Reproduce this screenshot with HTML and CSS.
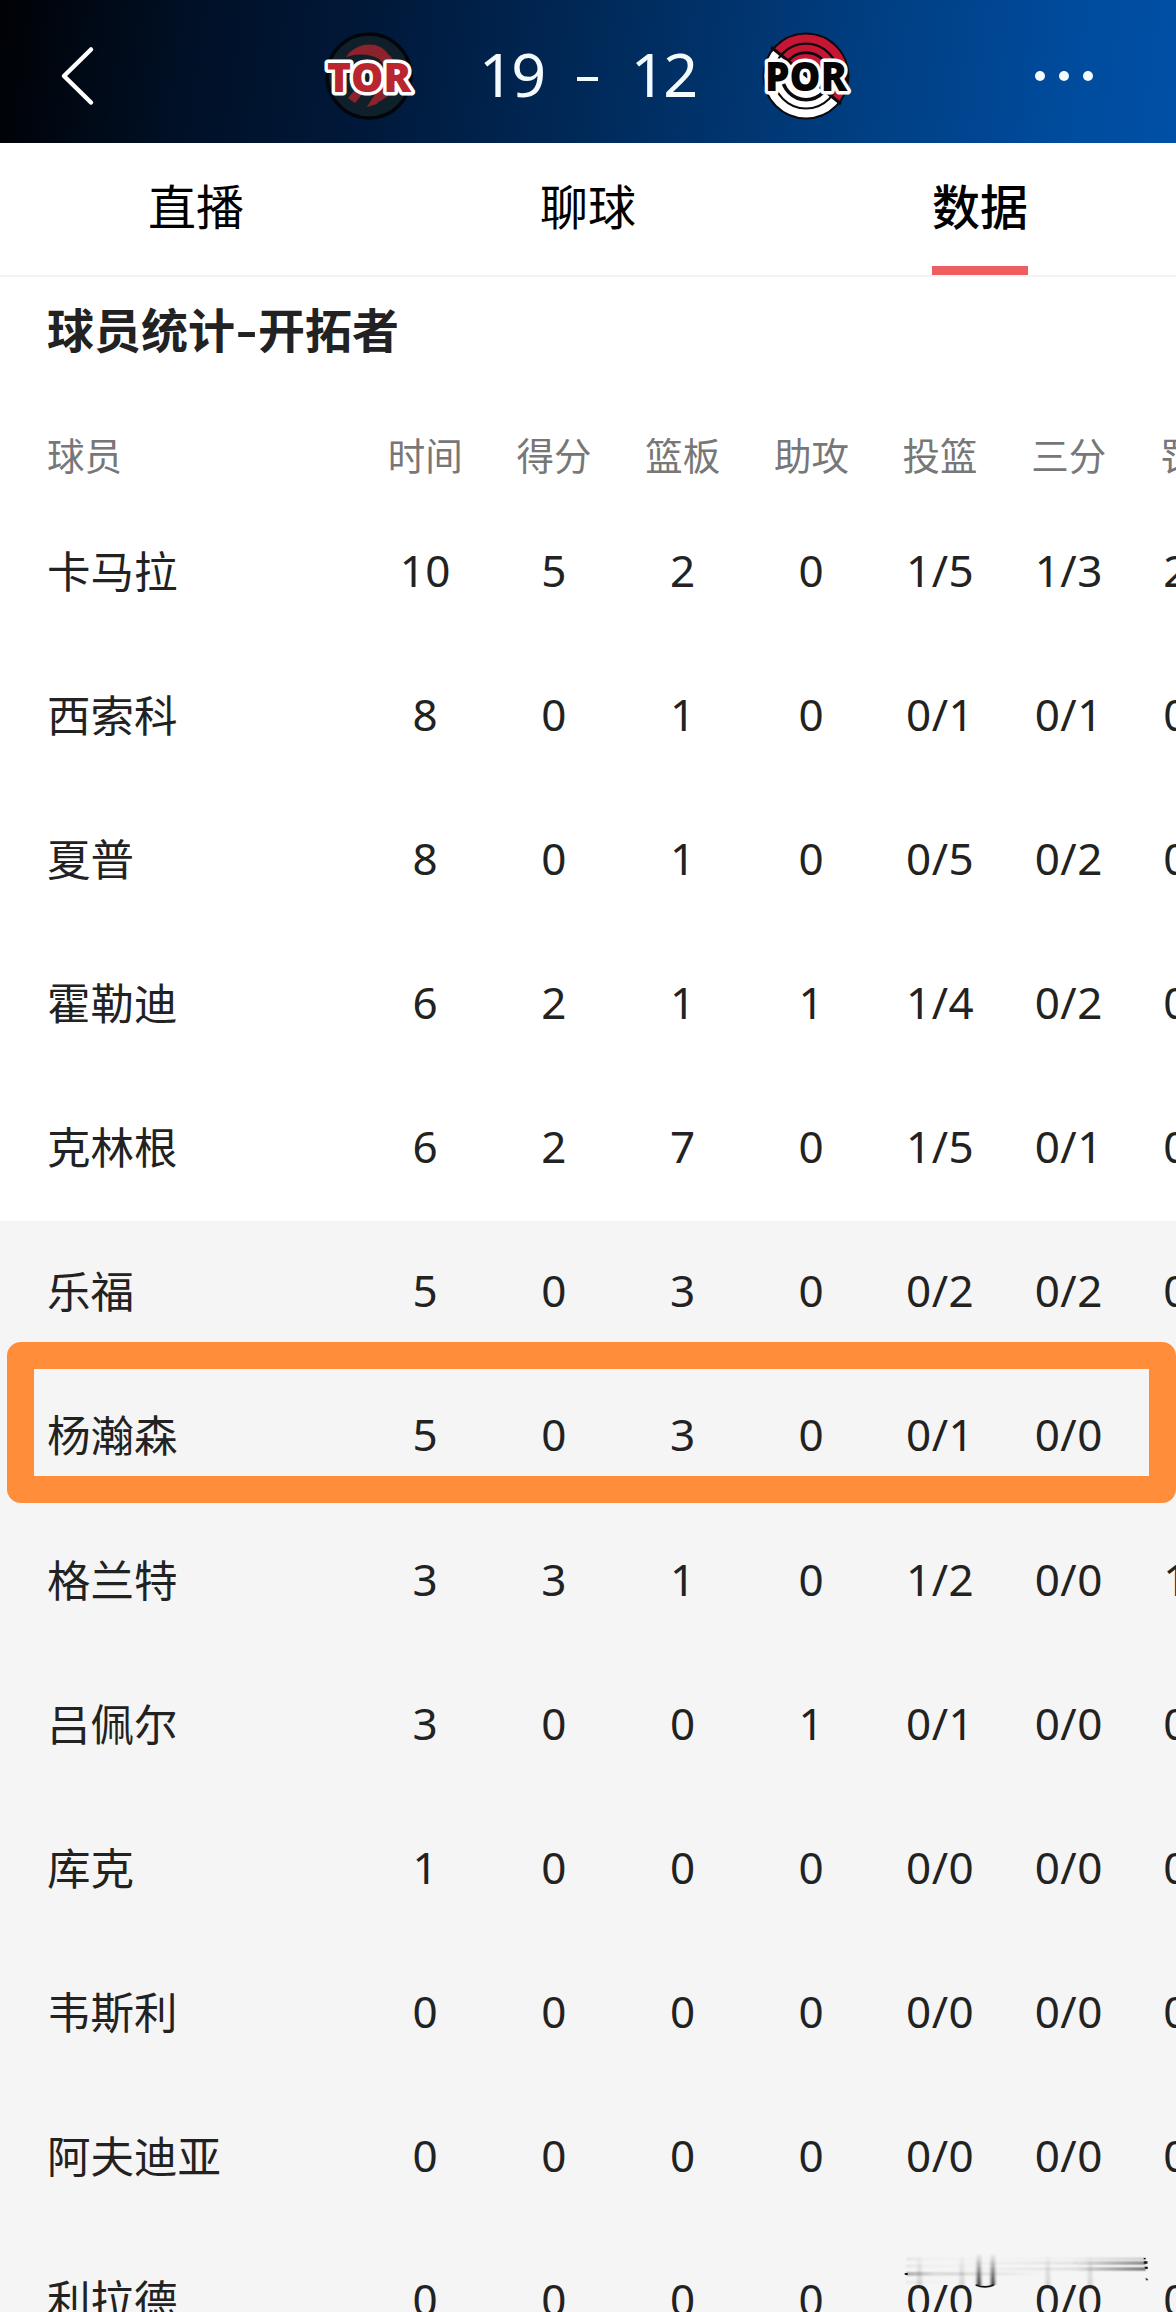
FILE: index.html
```html
<!DOCTYPE html>
<html lang="zh-CN">
  <head>
    <meta charset="UTF-8">
    <meta name="viewport" content="width=device-width,initial-scale=1.0">
    <title>球员统计</title>
    <link rel="stylesheet" href="styles.css">
  </head>
  <body>
    <header class="topbar">
      <svg class="back" viewBox="0 0 40 64"><path d="M34 5.500L7 32l27 26.500"/></svg>
      <div class="match">
        <svg class="logo" viewBox="0 0 100 100">
          <circle cx="50" cy="50" r="42" fill="#10202a" stroke="#02060c" stroke-width="3.500"/>
          <path d="M27 31C37 16 60 14 69 28c9 7 9 17 3 27-4 9-10 13-14 23l-10 3 11-17c7-12 9-24 1-31-9-5-20-6-33-2z" fill="#8c222b"/>
          <path d="M29 72l12-14 8 3-13 16z" fill="#8c222b"/>
          <path d="M48 81c13-5 26-11 31-26-9 8-18 10-24 15z" fill="#8c222b"/>
          <text class="tor" x="50" y="65.500" text-anchor="middle" textLength="84" lengthAdjust="spacingAndGlyphs">TOR</text>
        </svg>
        <div class="score"><span>19</span><i></i><span>12</span></div>
        <svg class="logo" viewBox="0 0 100 100">
          <defs>
            <clipPath id="upper"><path d="M11 18L89 81V0H11z"/></clipPath>
            <clipPath id="lower"><path d="M11 18L89 81V100H0V18z"/></clipPath>
          </defs>
          <circle cx="50" cy="50" r="43.500" fill="#0b0b0f"/>
          <g clip-path="url(#upper)" fill="none" stroke="#c61634">
            <circle cx="50" cy="50" r="37.500" stroke-width="8"/>
            <circle cx="50" cy="50" r="28" stroke-width="6.500"/>
            <circle cx="50" cy="50" r="19" stroke-width="6"/>
          </g>
          <g clip-path="url(#lower)" fill="none" stroke="#fff">
            <circle cx="50" cy="50" r="37.500" stroke-width="8"/>
            <circle cx="50" cy="50" r="28.500" stroke-width="6"/>
            <circle cx="50" cy="50" r="12" fill="#fff" stroke-width="20"/>
          </g>
          <path d="M15 21L85 78" stroke="#0b0b0f" stroke-width="3"/>
          <text class="por" x="50" y="65" text-anchor="middle" textLength="82" lengthAdjust="spacingAndGlyphs">POR</text>
        </svg>
      </div>
      <div class="more"><i></i><i></i><i></i></div>
    </header>

    <nav class="tabs">
      <a>直播</a>
      <a>聊球</a>
      <a class="active">数据</a>
    </nav>

    <main>
      <h1>球员统计<span class="dash">-</span>开拓者</h1>
      <div class="row head"><span>球员</span><span>时间</span><span>得分</span><span>篮板</span><span>助攻</span><span>投篮</span><span>三分</span><span>罚球</span></div>
      <div class="starters">
        <div class="row"><span>卡马拉</span><span>10</span><span>5</span><span>2</span><span>0</span><span>1/5</span><span>1/3</span><span>2/2</span></div>
        <div class="row"><span>西索科</span><span>8</span><span>0</span><span>1</span><span>0</span><span>0/1</span><span>0/1</span><span>0/0</span></div>
        <div class="row"><span>夏普</span><span>8</span><span>0</span><span>1</span><span>0</span><span>0/5</span><span>0/2</span><span>0/0</span></div>
        <div class="row"><span>霍勒迪</span><span>6</span><span>2</span><span>1</span><span>1</span><span>1/4</span><span>0/2</span><span>0/0</span></div>
        <div class="row"><span>克林根</span><span>6</span><span>2</span><span>7</span><span>0</span><span>1/5</span><span>0/1</span><span>0/0</span></div>
      </div>
      <div class="bench">
        <div class="row"><span>乐福</span><span>5</span><span>0</span><span>3</span><span>0</span><span>0/2</span><span>0/2</span><span>0/0</span></div>
        <div class="row marked"><span>杨瀚森</span><span>5</span><span>0</span><span>3</span><span>0</span><span>0/1</span><span>0/0</span><span></span></div>
        <div class="row"><span>格兰特</span><span>3</span><span>3</span><span>1</span><span>0</span><span>1/2</span><span>0/0</span><span>1/2</span></div>
        <div class="row"><span>吕佩尔</span><span>3</span><span>0</span><span>0</span><span>1</span><span>0/1</span><span>0/0</span><span>0/0</span></div>
        <div class="row"><span>库克</span><span>1</span><span>0</span><span>0</span><span>0</span><span>0/0</span><span>0/0</span><span>0/0</span></div>
        <div class="row"><span>韦斯利</span><span>0</span><span>0</span><span>0</span><span>0</span><span>0/0</span><span>0/0</span><span>0/0</span></div>
        <div class="row"><span>阿夫迪亚</span><span>0</span><span>0</span><span>0</span><span>0</span><span>0/0</span><span>0/0</span><span>0/0</span></div>
        <div class="row"><span>利拉德</span><span>0</span><span>0</span><span>0</span><span>0</span><span>0/0</span><span>0/0</span><span>0/0</span></div>
      </div>
    </main>

    <svg class="smear" viewBox="0 0 740 120">
      <defs>
        <linearGradient id="down" x2="0" y2="1"><stop offset="0" stop-color="#222" stop-opacity="0"/><stop offset="1" stop-color="#222"/></linearGradient>
        <linearGradient id="right"><stop offset="0" stop-color="#222" stop-opacity="0"/><stop offset=".6" stop-color="#222" stop-opacity=".12"/><stop offset="1" stop-color="#111" stop-opacity=".9"/></linearGradient>
        <linearGradient id="left"><stop offset="0" stop-color="#111" stop-opacity=".8"/><stop offset=".2" stop-color="#222" stop-opacity=".3"/><stop offset="1" stop-color="#222" stop-opacity="0"/></linearGradient>
        <filter id="soft" x="-1" width="3"><feGaussianBlur stdDeviation="4 2"/></filter>
        <filter id="softline" y="-1" height="3"><feGaussianBlur stdDeviation="1 2.500"/></filter>
      </defs>
      <g fill="url(#down)" filter="url(#soft)">
        <path d="M38 15h11v93H38zM165 15h11v93h-11zM423 15h11v93h-11zM550 15h11v93h-11z" opacity=".22"/>
        <path d="M216 10h11v95h-11zM258 10h11v95h-11z"/>
      </g>
      <g filter="url(#softline)">
        <path d="M160 37h562v5H160zM160 54h562v6H160z" fill="url(#right)"/>
        <path d="M160 24h562v5H160z" fill="url(#right)" opacity=".3"/>
        <path d="M4 69h420v5H4z" fill="url(#left)"/>
        <path d="M4 25h270v4H4zM4 46h270v4H4zM4 95h180v3H4z" fill="url(#left)" opacity=".2"/>
      </g>
      <path d="M212 105q28 11 55 0" fill="none" stroke="#111" stroke-width="5"/>
      <path d="M717 34h10v7h-10zM718 50h10v7h-6zM721 83l8 5-4 5zM716 24h6v4h-6zM-1 69h9v6H0z" fill="#080808"/>
    </svg>
  </body>
</html>
```
FILE: styles.css
```css
:root{--text:#222;--muted:#777;--line:#f3f3f3;--bench:#f5f5f5;--mark:#ff8d3a;--red:#ee5d5f}
*,*::after{box-sizing:border-box}
body{position:relative;margin:0;width:1176px;height:2312px;overflow:hidden;background:#fff;color:var(--text);font-family:"Noto Sans","Noto Sans CJK SC",sans-serif}

.topbar{height:143px;display:flex;align-items:center;padding:9px 83px 0 57px;background:linear-gradient(98deg,#000205 0%,#001026 16%,#00193a 32%,#002b5c 52%,#003f83 74%,#004b9c 90%,#0050a8 100%)}
.back{width:40px;height:64px;fill:none;stroke:#fff;stroke-width:4.500;stroke-linecap:round;stroke-linejoin:round}
.match{display:flex;align-items:center;margin-left:222px}
.logo{width:100px;height:100px;overflow:visible}
.logo text{font-family:"Open Sans","Noto Sans",sans-serif;font-weight:800;font-size:41px;paint-order:stroke;stroke:#fff;stroke-width:7px;stroke-linejoin:round}
.tor{fill:#b9262f}
.por{fill:#050505}
.score{width:336.500px;display:flex;align-items:center;justify-content:center;gap:33px;padding-bottom:5px;color:#f3fbff;font-size:61px;line-height:84px;letter-spacing:-2.500px}
.score i{width:21px;height:4px;margin-top:10px;background:#f3fbff}
.more{display:flex;gap:14px;margin-left:auto}
.more i{width:10px;height:10px;border-radius:50%;background:#f3fbff}

.tabs{height:134px;display:grid;grid-template-columns:repeat(3,1fr);justify-items:center;border-bottom:2px solid var(--line)}
.tabs a{height:132px;padding-top:20px;color:#000;font:400 48px/82px "Noto Sans CJK SC",sans-serif}
.tabs .active{font-weight:500;border-bottom:9px solid var(--red)}

h1{margin:0;padding:11px 0 0 47px;font:700 47px/80px "Noto Sans CJK SC",sans-serif;height:130.500px}
.dash{display:inline-block;width:23px;text-align:center;transform:scaleX(1.300)}

.row{position:relative;display:grid;grid-template-columns:314px repeat(7,128.700px);align-items:center;height:144.150px;padding:0 0 6px 47px;font-size:44px;line-height:60px}
.row span{text-align:center;letter-spacing:.500px;white-space:nowrap}
.row span:first-child{text-align:left;font-family:"Noto Sans CJK SC",sans-serif;font-size:43.500px;letter-spacing:0}
.head{height:93px;padding-bottom:1px;color:var(--muted)}
.head span,.head span:first-child{font-family:"Noto Sans CJK SC",sans-serif;font-size:37.500px;letter-spacing:0}
.bench{background:var(--bench)}
.marked::after{content:"";position:absolute;left:7px;top:-23px;width:1169px;height:161px;border:27px solid var(--mark);border-radius:14px}

.smear{position:absolute;left:905px;top:2250px;width:246.700px;height:40px;overflow:visible}
```
